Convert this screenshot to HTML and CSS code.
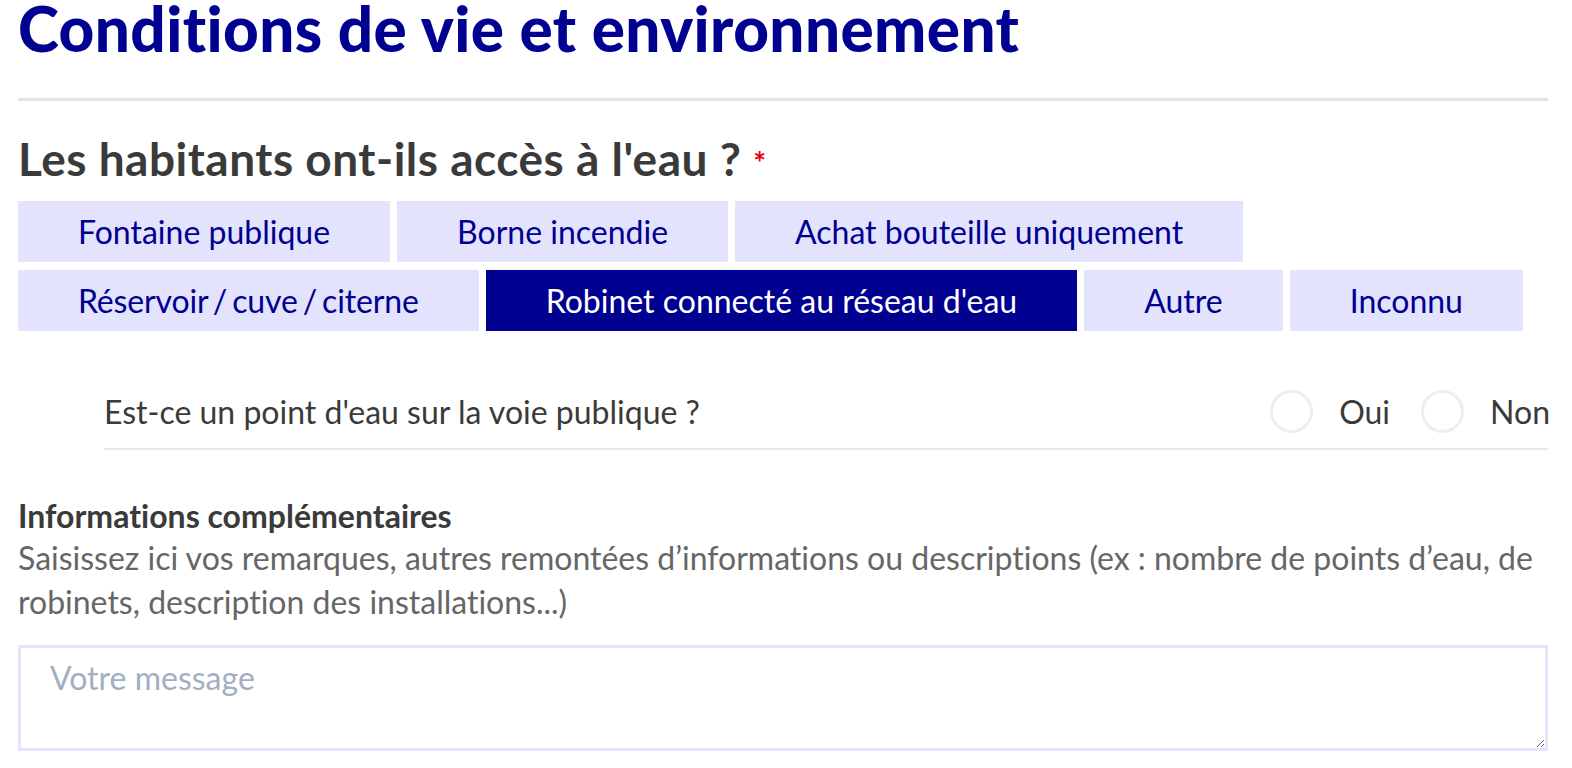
FILE: index.html
```html
<!DOCTYPE html>
<html lang="fr">
<head>
<meta charset="utf-8">
<title>Conditions de vie et environnement</title>
<link rel="stylesheet" href="styles.css">
</head>
<body>
<main class="page">
  <h1 class="title">Conditions de vie et environnement</h1>
  <hr class="divider">

  <section class="question">
    <h2 class="question-label">Les habitants ont-ils accès à l'eau ?<span class="required">*</span></h2>
    <div class="choices">
      <button class="choice" type="button">Fontaine publique</button>
      <button class="choice" type="button">Borne incendie</button>
      <button class="choice" type="button">Achat bouteille uniquement</button>
      <button class="choice choice--tight" type="button">Réservoir / cuve / citerne</button>
      <button class="choice choice--selected" type="button">Robinet connecté au réseau d'eau</button>
      <button class="choice" type="button">Autre</button>
      <button class="choice" type="button">Inconnu</button>
    </div>
  </section>

  <div class="sub-question">
    <span class="sub-label">Est-ce un point d'eau sur la voie publique ?</span>
    <div class="radios">
      <label class="radio"><span class="radio-circle"></span><span class="radio-text">Oui</span></label>
      <label class="radio"><span class="radio-circle"></span><span class="radio-text">Non</span></label>
    </div>
  </div>

  <section class="info">
    <div class="info-label">Informations complémentaires</div>
    <p class="info-hint">Saisissez ici vos remarques, autres remontées d’informations ou descriptions (ex : nombre de points d’eau, de robinets, description des installations...)</p>
    <textarea class="message" placeholder="Votre message"></textarea>
  </section>
</main>
</body>
</html>
```

FILE: styles.css
```css
* { box-sizing: border-box; }

html, body {
  margin: 0;
  padding: 0;
  background: #ffffff;
}

body {
  font-family: "Lato", "Noto Sans", "Liberation Sans", sans-serif;
  color: #3a3a3a;
  font-variant-ligatures: none;
  font-feature-settings: "liga" 0, "clig" 0;
}

.page {
  margin: 0 24px 0 18px;
}

.title {
  margin: 0;
  font-size: 62px;
  line-height: 56px;
  letter-spacing: 0.4px;
  font-weight: 900;
  color: #000091;
}

.divider {
  margin: 42px 0 0 0;
  border: 0;
  height: 3px;
  background: #dfe5ef;
}

.question-label {
  margin: 30px 0 0 0;
  font-size: 46px;
  line-height: 56px;
  letter-spacing: 0.5px;
  font-weight: 700;
  color: #3a3a3a;
}

.required {
  display: inline-block;
  margin-left: 12px;
  color: #e1000f;
  font-size: 30px;
  line-height: 1;
  letter-spacing: 0;
  vertical-align: 2px;
}

.choices {
  display: flex;
  flex-wrap: wrap;
  gap: 8px 7px;
  margin-top: 14px;
}

.choice {
  height: 61px;
  padding: 0 60px;
  border: 0;
  border-radius: 0;
  background: #e3e3fd;
  color: #000091;
  font-family: inherit;
  font-variant-ligatures: none;
  font-size: 32px;
  line-height: 40px;
  font-weight: 400;
  cursor: pointer;
}

.choice--tight {
  word-spacing: -3px;
  letter-spacing: -0.15px;
}

.choice--selected {
  background: #000091;
  color: #ffffff;
}

.sub-question {
  display: flex;
  align-items: center;
  justify-content: space-between;
  margin: 41px 0 0 86px;
  height: 78px;
  padding-top: 3px;
  border-bottom: 2px solid #e5e9f2;
}

.sub-label {
  font-size: 32px;
  line-height: 40px;
  color: #3a3a3a;
}

.radios {
  display: flex;
  gap: 31px;
  margin-right: -2px;
}

.radio {
  display: flex;
  align-items: center;
  gap: 26px;
}

.radio-circle {
  width: 43px;
  height: 43px;
  border-radius: 50%;
  border: 3px solid #eeeeee;
}

.radio-text {
  font-size: 32px;
  line-height: 40px;
  color: #3a3a3a;
}

.info {
  margin-top: 46px;
}

.info-label {
  font-size: 32px;
  line-height: 40px;
  font-weight: 700;
  color: #3a3a3a;
}

.info-hint {
  margin: 0;
  font-size: 32px;
  line-height: 44px;
  color: #666666;
}

.message {
  display: block;
  width: 100%;
  height: 106px;
  margin-top: 21px;
  padding: 10px 29px;
  border: 3px solid #e3e3fd;
  border-radius: 0;
  font-family: inherit;
  font-size: 32px;
  line-height: 40px;
  color: #3a3a3a;
  resize: vertical;
  outline: none;
}

.message::placeholder {
  color: #a1afc2;
}
```
